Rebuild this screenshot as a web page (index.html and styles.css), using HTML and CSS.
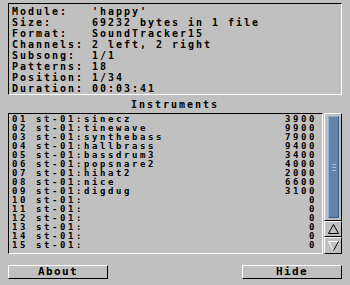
FILE: index.html
```
<!DOCTYPE html>
<html lang="en">
<head>
    <meta charset="UTF-8">
    <title>Module Info</title>
    <link rel="stylesheet" href="styles.css">
</head>
<body>
    <div class="window">
        <div class="info">
            <div class="info-row"><span>Module:</span><span>'happy'</span></div>
            <div class="info-row"><span>Size:</span><span>69232 bytes in 1 file</span></div>
            <div class="info-row"><span>Format:</span><span>SoundTracker15</span></div>
            <div class="info-row"><span>Channels:</span><span>2 left, 2 right</span></div>
            <div class="info-row"><span>Subsong:</span><span>1/1</span></div>
            <div class="info-row"><span>Patterns:</span><span>18</span></div>
            <div class="info-row"><span>Position:</span><span>1/34</span></div>
            <div class="info-row"><span>Duration:</span><span>00:03:41</span></div>
        </div>

        <h2 class="title">Instruments</h2>

        <div class="listArea">
            <div class="list">
                <div class="row"><span>01 st-01:sinecz</span><span>3900</span></div>
                <div class="row"><span>02 st-01:tinewave</span><span>9900</span></div>
                <div class="row"><span>03 st-01:synthebass</span><span>7900</span></div>
                <div class="row"><span>04 st-01:hallbrass</span><span>9400</span></div>
                <div class="row"><span>05 st-01:bassdrum3</span><span>3400</span></div>
                <div class="row"><span>06 st-01:popsnare2</span><span>4000</span></div>
                <div class="row"><span>07 st-01:hihat2</span><span>2000</span></div>
                <div class="row"><span>08 st-01:nice</span><span>6600</span></div>
                <div class="row"><span>09 st-01:digdug</span><span>3100</span></div>
                <div class="row"><span>10 st-01:</span><span>0</span></div>
                <div class="row"><span>11 st-01:</span><span>0</span></div>
                <div class="row"><span>12 st-01:</span><span>0</span></div>
                <div class="row"><span>13 st-01:</span><span>0</span></div>
                <div class="row"><span>14 st-01:</span><span>0</span></div>
                <div class="row"><span>15 st-01:</span><span>0</span></div>
            </div>
            <div class="scroller">
                <div class="track">
                    <div class="knob"><div class="grip"></div></div>
                </div>
                <div class="arrow">
                    <svg width="11" height="10" viewBox="0 0 11 10">
                        <polyline points="0.5,9.5 5.5,0.5 10.5,9.5 0.5,9.5" fill="none" stroke="#000" stroke-width="1"/>
                    </svg>
                </div>
                <div class="arrow">
                    <svg width="11" height="10" viewBox="0 0 11 10">
                        <polyline points="5.5,9.5 0.5,0.5 10.5,0.5" fill="none" stroke="#fff" stroke-width="1"/>
                        <line x1="10.5" y1="0.5" x2="5.5" y2="9.5" stroke="#000" stroke-width="1"/>
                    </svg>
                </div>
            </div>
        </div>

        <div class="buttons">
            <button class="btn">About</button>
            <button class="btn">Hide</button>
        </div>
    </div>
</body>
</html>
```

FILE: styles.css
```
body {
    margin: 0;
    background-color: #c0c0c0;
    font-family: 'DejaVu Sans Mono', 'Liberation Mono', monospace;
    font-weight: bold;
    color: #000;
}

.window {
    width: 334px;
    padding: 3px 8px 0 8px;
}

.info {
    height: 92px;
    box-sizing: border-box;
    padding: 2px 3px 0 3px;
    border-top: 1px solid #000;
    border-left: 1px solid #000;
    border-right: 1px solid #fff;
    border-bottom: 1px solid #fff;
    font-size: 10px;
    line-height: 11px;
    letter-spacing: 1.98px;
}

.info-row {
    display: grid;
    grid-template-columns: 80px 1fr;
    white-space: pre;
}

.title {
    margin: 4px 0 3px 0;
    font-size: 10px;
    line-height: 11px;
    letter-spacing: 1.98px;
    text-align: center;
}

.listArea {
    display: flex;
    gap: 1px;
    height: 141px;
}

.list {
    flex: 1;
    box-sizing: border-box;
    padding: 1px 5px 3px 3px;
    border-top: 1px solid #000;
    border-left: 1px solid #000;
    border-right: 1px solid #fff;
    border-bottom: 1px solid #fff;
    font-size: 9px;
    line-height: 9px;
    letter-spacing: 2.58px;
}

.row {
    display: flex;
    justify-content: space-between;
    white-space: pre;
}

.scroller {
    width: 18px;
    display: flex;
    flex-direction: column;
}

.track {
    flex: 1;
    box-sizing: border-box;
    padding: 2px 2px 2px 3px;
    border-top: 1px solid #fff;
    border-left: 1px solid #fff;
    border-right: 1px solid #000;
    border-bottom: 1px solid #000;
}

.knob {
    height: 100%;
    box-sizing: border-box;
    background-color: #6283aa;
    border-top: 1px solid #93aecd;
    border-left: 1px solid #93aecd;
    border-right: 1px solid #3d5b80;
    border-bottom: 1px solid #3d5b80;
    display: flex;
    align-items: center;
    justify-content: center;
}

.grip {
    width: 4px;
    height: 7px;
    background: repeating-linear-gradient(#a9c0da 0 1px, transparent 1px 3px);
}

.arrow {
    height: 16px;
    box-sizing: border-box;
    border-top: 1px solid #fff;
    border-left: 1px solid #fff;
    border-right: 1px solid #000;
    border-bottom: 1px solid #000;
    display: flex;
    align-items: center;
    justify-content: center;
}

.arrow:last-child {
    height: 17px;
}

.buttons {
    display: flex;
    justify-content: space-between;
    margin-top: 11px;
}

.btn {
    width: 100px;
    height: 14px;
    padding: 0;
    background-color: #c0c0c0;
    border-top: 1px solid #fff;
    border-left: 1px solid #fff;
    border-right: 1px solid #000;
    border-bottom: 1px solid #000;
    font-family: 'DejaVu Sans Mono', 'Liberation Mono', monospace;
    font-weight: bold;
    font-size: 11px;
    line-height: 12px;
    letter-spacing: 1.38px;
    color: #000;
}
```
